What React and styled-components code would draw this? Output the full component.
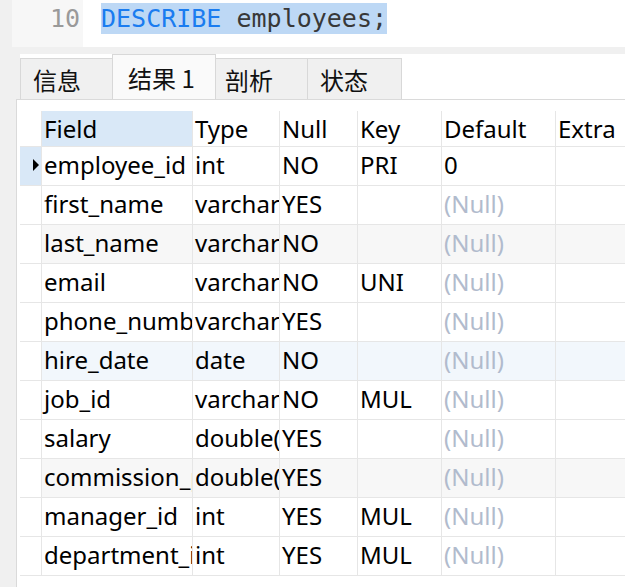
import React from "react";
import styled, { createGlobalStyle } from "styled-components";

const GlobalStyle = createGlobalStyle`
  html, body {
    margin: 0;
    padding: 0;
    height: 100%;
    background: #f0f0f0;
  }
  #root {
    height: 100%;
  }
`;

const Window = styled.div`
  display: flex;
  flex-direction: column;
  height: 100vh;
  padding-left: 12px;
  box-sizing: border-box;
  overflow: hidden;
  background: #f0f0f0;
`;

const Editor = styled.div`
  display: flex;
  flex-shrink: 0;
  height: 47px;
  background: #fff;
`;

const Gutter = styled.div`
  width: 71px;
  box-sizing: border-box;
  padding: 3px 3px 0 0;
  background: #f7f7f7;
  text-align: right;
  font: 25px/31px "DejaVu Sans Mono", monospace;
  color: #9a9a9a;
`;

const Code = styled.div`
  padding: 3px 0 0 18px;
  font: 25px/31px "DejaVu Sans Mono", monospace;
  color: #383838;
  white-space: pre;
`;

const Selection = styled.span`
  display: inline-block;
  height: 31px;
  background: #bdd8f5;
`;

const Keyword = styled.span`
  color: #1a7cf0;
`;

const TabBar = styled.div`
  display: flex;
  align-items: flex-end;
  flex-shrink: 0;
  height: 45px;
  margin: 7px 0 0 8px;
  background: #fff;
`;

const Tab = styled.div`
  display: flex;
  align-items: center;
  box-sizing: border-box;
  width: ${(p) => p.$w}px;
  height: ${(p) => (p.$active ? 45 : 41)}px;
  margin-right: -1px;
  padding-left: ${(p) => p.$pl}px;
  border: 1px solid #d8d8d8;
  border-bottom: none;
  background: ${(p) => (p.$active ? "#fafafa" : "#f0f0f0")};
  font: 24px "Noto Sans CJK SC", "Noto Sans", sans-serif;
  color: #111;
  white-space: nowrap;
`;

const Panel = styled.div`
  flex: 1;
  margin-left: 4px;
  padding: 11px 0 0 3px;
  border-left: 1px solid #dadada;
  border-top: 1px solid #dadada;
  background: #fff;
  overflow: hidden;
`;

const Row = styled.div`
  display: grid;
  grid-template-columns: 22px 151px 87px 78px 84px 114px 120px;
  height: ${(p) => (p.$head ? 36 : 39)}px;

  & > div {
    padding-bottom: ${(p) => (p.$head ? 0 : 3)}px;
  }
`;

const Cell = styled.div`
  display: flex;
  align-items: center;
  box-sizing: border-box;
  padding-left: 2px;
  border-right: 1px solid #e6e6e6;
  border-bottom: 1px solid #e6e6e6;
  background: ${(p) => p.$bg || "#fff"};
  color: ${(p) => (p.$muted ? "#b1bbcd" : "#000")};
  font: 24px "Noto Sans", sans-serif;
  white-space: nowrap;
  overflow: hidden;
`;

const Indicator = styled(Cell)`
  padding-left: 13px;
  background: ${(p) => (p.$current ? "#d9e8f7" : "#fff")};
`;

const columns = ["Field", "Type", "Null", "Key", "Default", "Extra"];

const rows = [
  ["employee_id", "int", "NO", "PRI", "0"],
  ["first_name", "varchar(20)", "YES", "", null],
  ["last_name", "varchar(25)", "NO", "", null],
  ["email", "varchar(25)", "NO", "UNI", null],
  ["phone_number", "varchar(20)", "YES", "", null],
  ["hire_date", "date", "NO", "", null],
  ["job_id", "varchar(10)", "NO", "MUL", null],
  ["salary", "double(8,2)", "YES", "", null],
  ["commission_pct", "double(2,2)", "YES", "", null],
  ["manager_id", "int", "YES", "MUL", null],
  ["department_id", "int", "YES", "MUL", null],
];

const rowTone = (i) => {
  if (i === 5) return "#f2f7fc";
  if (i % 6 === 2) return "#f7f7f7";
  return "#fff";
};

const Arrow = () => (
  <svg width="6" height="12" viewBox="0 0 6 12">
    <path d="M0 0 L6 6 L0 12 Z" fill="#000" />
  </svg>
);

const tabs = [
  { label: "信息", w: 93, pl: 12 },
  { label: "结果 1", w: 104, pl: 15, active: true },
  { label: "剖析", w: 93, pl: 9 },
  { label: "状态", w: 95, pl: 12 },
];

export default function App() {
  return (
    <>
      <GlobalStyle />
      <Window>
        <Editor>
          <Gutter>10</Gutter>
          <Code>
            <Selection>
              <Keyword>DESCRIBE</Keyword> employees;
            </Selection>
          </Code>
        </Editor>

        <TabBar>
          {tabs.map((t) => (
            <Tab key={t.label} $w={t.w} $pl={t.pl} $active={t.active}>
              {t.label}
            </Tab>
          ))}
        </TabBar>

        <Panel>
          <Row $head>
            <Indicator />
            {columns.map((c, i) => (
              <Cell key={c} $bg={i === 0 ? "#d9e8f7" : "#fff"}>
                {c}
              </Cell>
            ))}
          </Row>
          {rows.map((r, i) => {
            const bg = rowTone(i);
            return (
              <Row key={r[0]}>
                <Indicator $current={i === 0}>{i === 0 && <Arrow />}</Indicator>
                <Cell $bg={bg}>{r[0]}</Cell>
                <Cell $bg={bg}>{r[1]}</Cell>
                <Cell $bg={bg}>{r[2]}</Cell>
                <Cell $bg={bg}>{r[3]}</Cell>
                <Cell $bg={bg} $muted={r[4] === null}>
                  {r[4] === null ? "(Null)" : r[4]}
                </Cell>
                <Cell $bg={bg} />
              </Row>
            );
          })}
        </Panel>
      </Window>
    </>
  );
}
